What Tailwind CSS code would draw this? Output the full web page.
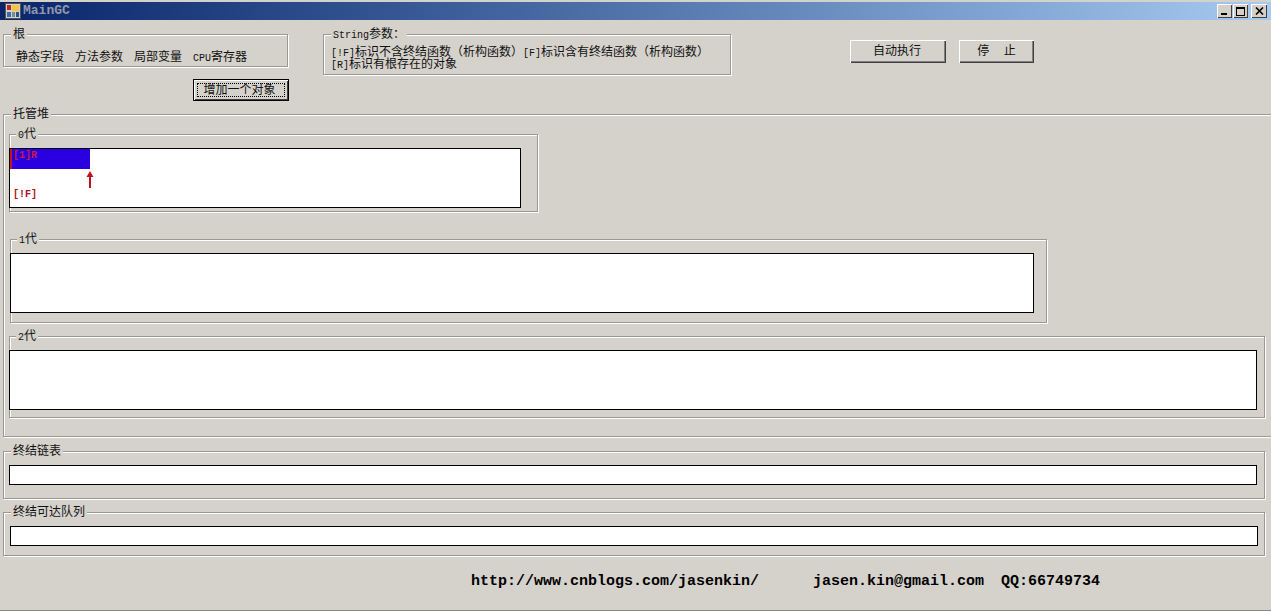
<!DOCTYPE html>
<html lang="en">
<head>
    <meta charset="UTF-8">
    <title>MainGC</title>
    <script src="https://cdn.jsdelivr.net/npm/@tailwindcss/browser@4"></script>
</head>
<body class="bg-[#d5d2cc] overflow-hidden">
<div class="w-[1271px] h-[611px] overflow-hidden border-b border-[#8a8780] text-[12px] leading-[12px] text-[#111] font-['Liberation_Mono','Noto_Sans_CJK_SC',monospace]">

    <!-- title bar -->
    <div class="mt-[2px] h-[18px] flex items-center pl-[5px] pr-[4px] bg-gradient-to-r from-[#0a246a] to-[#a6caf0]">
        <svg width="16" height="16" viewBox="0 0 16 16" class="shrink-0">
            <rect x="0.5" y="0.5" width="15" height="15" fill="#d4d0c8" stroke="#555"/>
            <rect x="2" y="2" width="4" height="5" fill="#c0272d"/>
            <rect x="7" y="2" width="7" height="6" fill="#f5c53a"/>
            <rect x="2" y="9" width="4" height="5" fill="#3a6ea5"/>
            <rect x="7" y="9" width="3" height="5" fill="#7a8a9a"/>
            <rect x="11" y="9" width="3" height="5" fill="#2f4f8f"/>
        </svg>
        <span class="ml-[2px] text-[13px] font-bold text-[#8f98ab] font-['Liberation_Mono',monospace]">MainGC</span>
        <div class="ml-auto flex items-center">
            <div class="w-[15px] h-[14px] bg-[#d4d0c8] shadow-[inset_1px_1px_0_#fff,inset_-1px_-1px_0_#404040] flex items-end justify-start pl-[4px] pb-[3px]">
                <div class="w-[6px] h-[2px] bg-black"></div>
            </div>
            <div class="ml-px w-[15px] h-[14px] bg-[#d4d0c8] shadow-[inset_1px_1px_0_#fff,inset_-1px_-1px_0_#404040] flex items-center justify-center">
                <div class="w-[9px] h-[9px] border border-black border-t-2"></div>
            </div>
            <div class="ml-[3px] w-[16px] h-[14px] bg-[#d4d0c8] shadow-[inset_1px_1px_0_#fff,inset_-1px_-1px_0_#404040] flex items-center justify-center">
                <svg width="9" height="8" viewBox="0 0 9 8"><path d="M1 0.5 L8 7.5 M8 0.5 L1 7.5" stroke="#000" stroke-width="1.6"/></svg>
            </div>
        </div>
    </div>

    <!-- top row -->
    <div class="mt-[14px] ml-[3px] flex items-start">
        <div class="relative w-[285px] h-[33px] border border-[#9c9890] shadow-[1px_1px_0_#fff,inset_1px_1px_0_#fff] flex items-center gap-[11px] pl-[12px] pt-[15px]">
            <span class="absolute -top-[6px] left-[7px] px-[2px] bg-[#d5d2cc]">根</span>
            <span>静态字段</span><span>方法参数</span><span>局部变量</span>
            <span><span class="text-[10px]">CPU</span>寄存器</span>
        </div>
        <div class="relative ml-[35px] w-[408px] h-[41px] border border-[#9c9890] shadow-[1px_1px_0_#fff,inset_1px_1px_0_#fff] pl-[7px] pt-[11px] whitespace-nowrap">
            <span class="absolute -top-[6px] left-[7px] px-[2px] bg-[#d5d2cc]"><span class="text-[10px]">String</span>参数：</span>
            <div class="translate-y-px"><span class="text-[10px]">[!F]</span>标识不含终结函数（析构函数）<span class="text-[10px]">[F]</span>标识含有终结函数（析构函数）</div>
            <div><span class="text-[10px]">[R]</span>标识有根存在的对象</div>
        </div>
        <button class="ml-[119px] mt-[6px] w-[96px] h-[23px] pr-[2px] bg-[#d5d2cc] shadow-[inset_1px_1px_0_#fff,inset_-1px_-1px_0_#404040,inset_-2px_-2px_0_#808080]">自动执行</button>
        <button class="ml-[13px] mt-[6px] w-[75px] h-[23px] bg-[#d5d2cc] shadow-[inset_1px_1px_0_#fff,inset_-1px_-1px_0_#404040,inset_-2px_-2px_0_#808080]">停&nbsp;&nbsp;止</button>
    </div>

    <!-- add object -->
    <button class="block mt-[4px] ml-[193px] w-[96px] h-[22px] border border-black bg-[#d5d2cc] shadow-[inset_1px_1px_0_#fff,inset_-1px_-1px_0_#404040] p-[3px]">
        <span class="flex items-center justify-center h-full pr-[3px] pt-[1px] border border-dotted border-black">增加一个对象</span>
    </button>

    <!-- managed heap -->
    <div class="relative mt-[13px] ml-[3px] w-[1275px] h-[323px] border border-[#9c9890] shadow-[1px_1px_0_#fff,inset_1px_1px_0_#fff] pt-[19px] pl-[5px]">
        <span class="absolute -top-[6px] left-[7px] px-[2px] bg-[#d5d2cc]">托管堆</span>

        <div class="relative w-[529px] h-[78px] border border-[#9c9890] shadow-[1px_1px_0_#fff,inset_1px_1px_0_#fff] pt-[13px]">
            <span class="absolute -top-[6px] left-[6px] px-[2px] bg-[#d5d2cc]"><span class="text-[10px]">0</span>代</span>
            <div class="relative -ml-px w-[512px] h-[60px] bg-white border border-black">
                <div class="w-[80px] h-[20px] bg-[#2a00e0] border-l-2 border-[#c0102a] pl-[1px] pt-[2px] text-[10px] leading-[10px] font-bold text-[#c81848]">[1]R</div>
                <svg width="8" height="18" viewBox="0 0 8 18" class="absolute left-[76px] top-[21px]">
                    <path d="M4 1 L7.5 7 L5 7 L5 18 L3 18 L3 7 L0.5 7 Z" fill="#c01020"/>
                </svg>
                <span class="absolute left-[3px] top-[41px] text-[10px] leading-[10px] font-bold text-[#b01020]">[!F]</span>
            </div>
        </div>

        <div class="relative mt-[27px] ml-[1px] w-[1037px] h-[84px] border border-[#9c9890] shadow-[1px_1px_0_#fff,inset_1px_1px_0_#fff] pt-[13px]">
            <span class="absolute -top-[6px] left-[6px] px-[2px] bg-[#d5d2cc]"><span class="text-[10px]">1</span>代</span>
            <div class="-ml-px w-[1024px] h-[60px] bg-white border border-black"></div>
        </div>

        <div class="relative mt-[13px] w-[1256px] h-[82px] border border-[#9c9890] shadow-[1px_1px_0_#fff,inset_1px_1px_0_#fff] pt-[13px]">
            <span class="absolute -top-[6px] left-[6px] px-[2px] bg-[#d5d2cc]"><span class="text-[10px]">2</span>代</span>
            <div class="-ml-px w-[1248px] h-[60px] bg-white border border-black"></div>
        </div>
    </div>

    <!-- finalization list -->
    <div class="relative mt-[14px] ml-[3px] w-[1262px] h-[48px] border border-[#9c9890] shadow-[1px_1px_0_#fff,inset_1px_1px_0_#fff] pt-[13px] pl-[5px]">
        <span class="absolute -top-[6px] left-[7px] px-[2px] bg-[#d5d2cc]">终结链表</span>
        <div class="w-[1248px] h-[20px] bg-white border border-black"></div>
    </div>

    <!-- freachable queue -->
    <div class="relative mt-[13px] ml-[3px] w-[1262px] h-[44px] border border-[#9c9890] shadow-[1px_1px_0_#fff,inset_1px_1px_0_#fff] pt-[13px] pl-[6px]">
        <span class="absolute -top-[6px] left-[7px] px-[2px] bg-[#d5d2cc]">终结可达队列</span>
        <div class="w-[1248px] h-[20px] bg-white border border-black"></div>
    </div>

    <!-- footer -->
    <div class="mt-[17px] ml-[471px] flex text-[15px] leading-[17px] font-semibold text-black whitespace-nowrap">
        <span>http://www.cnblogs.com/jasenkin/</span>
        <span class="ml-[54px]">jasen.kin@gmail.com</span>
        <span class="ml-[17px]">QQ:66749734</span>
    </div>
</div>
</body>
</html>
